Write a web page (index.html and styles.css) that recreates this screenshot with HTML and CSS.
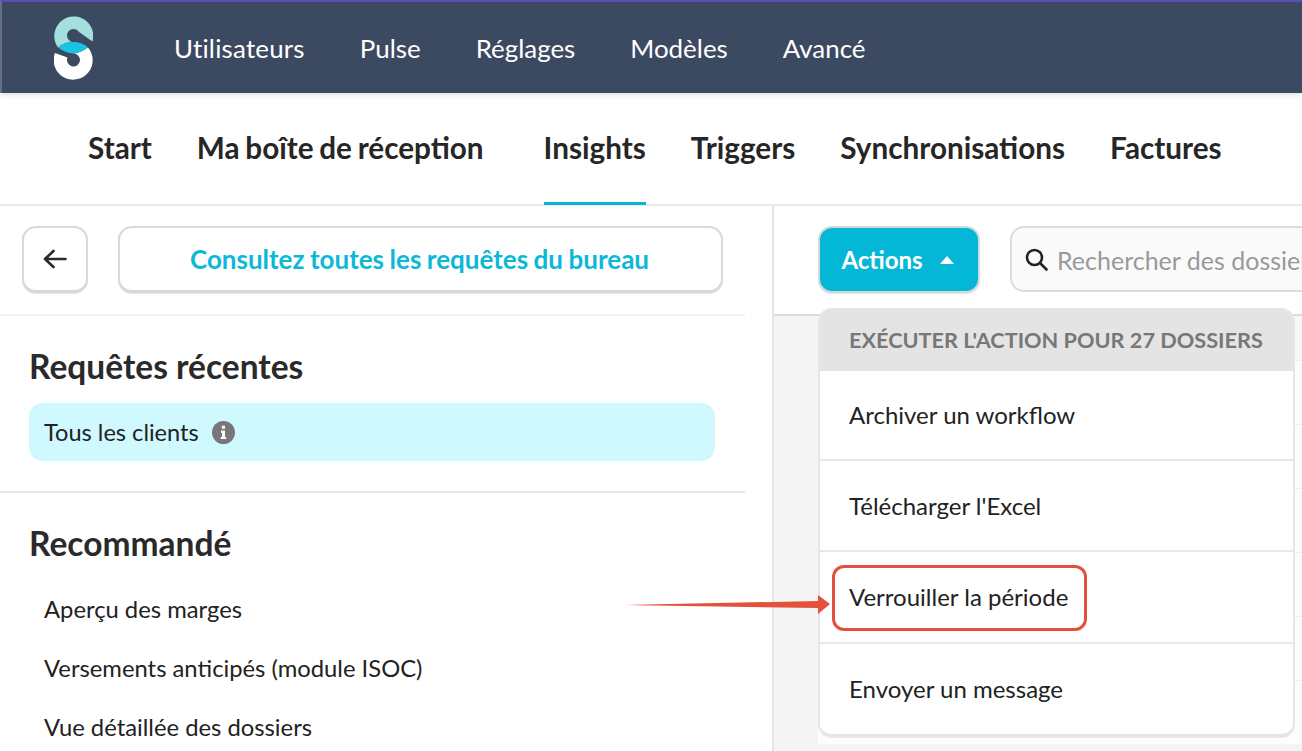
FILE: index.html
```html
<!DOCTYPE html>
<html lang="fr">
<head>
  <meta charset="UTF-8" />
  <meta name="viewport" content="width=device-width, initial-scale=1" />
  <title>Insights</title>
  <link rel="stylesheet" href="styles.css">
</head>
<body>
  <header class="topbar">
    <svg class="logo" viewBox="54 16 39 64" width="39" height="64" aria-label="Logo">
      <path fill="#a3e0dd" d="M92.5 41.5A19.5 19.5 0 1 0 58 47.5Q65 41.5 73.5 42A6.5 6.5 0 1 1 79 32Z"/>
      <path fill="#fff" d="M55 53A19.5 19.5 0 1 0 88 47.5Q80 53 73.5 53.5A6.5 6.5 0 1 1 67.5 57.5Z"/>
      <path fill="#19c3e3" d="M58 47.5Q65 41.5 73.5 42Q82 42 88 47.5Q80 53 73.5 53.5Q65 53 58 47.5Z"/>
    </svg>
    <nav class="topnav">
      <a>Utilisateurs</a>
      <a>Pulse</a>
      <a>Réglages</a>
      <a>Modèles</a>
      <a>Avancé</a>
    </nav>
  </header>

  <nav class="tabs">
    <a>Start</a>
    <a class="tab-wide">Ma boîte de réception</a>
    <a class="active">Insights</a>
    <a>Triggers</a>
    <a>Synchronisations</a>
    <a>Factures</a>
  </nav>

  <main class="content">
    <aside class="sidebar">
      <div class="side-actions">
        <button class="btn btn-back" aria-label="Retour">
          <svg width="24" height="24" viewBox="0 0 24 24" fill="none" stroke="#2b2b2b" stroke-width="2.6" stroke-linecap="round" stroke-linejoin="round"><path d="M22.5 12H2M10.5 4L2 12L10.5 20"/></svg>
        </button>
        <button class="btn btn-all">Consultez toutes les requêtes du bureau</button>
      </div>

      <section class="side-section">
        <h2>Requêtes récentes</h2>
        <div class="query-active">
          Tous les clients
          <svg class="info" width="23" height="23" viewBox="0 0 22 22"><circle cx="11" cy="11" r="11" fill="#777"/><path fill="#fff" d="M9.4 4.6h3v2.8h-3zM8.6 9.2h3.8v6h1.2v2h-5.2v-2h1.2v-4h-1z"/></svg>
        </div>
      </section>

      <section class="side-section">
        <h2>Recommandé</h2>
        <ul class="query-list">
          <li>Aperçu des marges</li>
          <li>Versements anticipés (module ISOC)</li>
          <li>Vue détaillée des dossiers</li>
        </ul>
      </section>
    </aside>

    <section class="panel">
      <div class="toolbar">
        <button class="btn-actions">Actions <span class="caret"></span></button>
        <div class="search">
          <svg width="25" height="25" viewBox="0 0 25 25" fill="none" stroke="#222" stroke-width="2.6" stroke-linecap="round"><circle cx="10.5" cy="10.5" r="7.5"/><path d="M16 16L22.5 22.5"/></svg>
          <span>Rechercher des dossiers</span>
        </div>

        <div class="menu">
          <div class="menu-head">Exécuter l'action pour 27 dossiers</div>
          <a>Archiver un workflow</a>
          <a>Télécharger l'Excel</a>
          <a>Verrouiller la période</a>
          <a>Envoyer un message</a>
        </div>
      </div>

      <div class="table">
        <div class="table-head"></div>
        <div class="row"></div>
        <div class="row"></div>
        <div class="row"></div>
        <div class="row"></div>
        <div class="row"></div>
        <div class="row"></div>
      </div>
    </section>
  </main>

  <!-- Annotation drawn over the screenshot -->
  <div class="callout"></div>
  <svg class="callout-arrow" width="210" height="24" viewBox="0 0 210 24">
    <defs>
      <linearGradient id="tail" x1="0" x2="1" y1="0" y2="0">
        <stop offset="0" stop-color="#e4503b" stop-opacity=".35"/>
        <stop offset=".08" stop-color="#e4503b"/>
      </linearGradient>
    </defs>
    <polygon fill="url(#tail)" points="0,12 196,8 196,2 208,11 196,21 196,15"/>
  </svg>
</body>
</html>
```

FILE: styles.css
```css
* {
  box-sizing: border-box;
}

html, body {
  height: 100%;
}

body {
  margin: 0;
  font-family: 'Lato', 'Liberation Sans', sans-serif;
  color: #222;
  background: #fff;
  overflow: hidden;
}

button {
  font-family: inherit;
  cursor: pointer;
}

/* Top bar */
.topbar {
  height: 93px;
  display: flex;
  align-items: center;
  padding-left: 52px;
  background: #3c4a61;
  border-top: 2px solid #5c4fb3;
  border-left: 2px solid #667186;
  box-shadow: 0 2px 6px rgba(0, 0, 0, 0.12);
  position: relative;
}

.logo {
  flex: none;
  margin-top: 1px;
}

.topnav {
  display: flex;
  gap: 55px;
  margin-left: 81px;
  padding-top: 1px;
}

.topnav a {
  color: #fff;
  font-size: 25.9px;
}

.topnav a:first-child {
  letter-spacing: 0.2px;
}

/* Main tabs */
.tabs {
  height: 113px;
  display: flex;
  gap: 45px;
  padding-left: 88px;
  border-bottom: 2px solid #e8e8e8;
}

.tabs a {
  display: flex;
  align-items: center;
  padding-bottom: 1px;
  font-size: 29.7px;
  word-spacing: -1.5px;
  font-weight: 700;
  color: #262626;
  border-bottom: 3px solid transparent;
  margin-bottom: -1px;
}

.tabs .tab-wide {
  margin-right: 15px;
}

.tabs .active {
  border-bottom-color: #05b7d6;
}

/* Layout below the tabs */
.content {
  display: flex;
  height: 545px;
}

.sidebar {
  width: 774px;
  flex: none;
  border-right: 2px solid #e6e6e6;
}

.side-actions {
  display: flex;
  gap: 30px;
  width: 745px;
  padding: 20px 22px 21px 22px;
  border-bottom: 2px solid #f1f1f1;
}

.btn {
  height: 67px;
  background: #fff;
  border: 2px solid #d9d9d9;
  border-bottom-width: 3px;
  border-radius: 14px;
  box-shadow: 0 1px 1px #e6e6e6;
}

.btn-back {
  width: 66px;
  flex: none;
  display: flex;
  align-items: center;
  justify-content: center;
  padding: 0;
}

.btn-all {
  flex: 1;
  padding: 0 8px 0 6px;
  color: #0cb8d7;
  font-size: 26px;
  word-spacing: -0.8px;
  font-weight: 700;
}

.side-section {
  width: 745px;
  padding: 0 30px;
}

.side-section + .side-section {
  border-top: 2px solid #e8e8e8;
}

.side-section h2 {
  margin: 0 0 0 -1px;
  padding-top: 30px;
  font-size: 33.5px;
  line-height: 40px;
  font-weight: 700;
  color: #2a2a2a;
}

.query-active {
  display: flex;
  align-items: center;
  gap: 13px;
  height: 58px;
  margin: 17px 0 30px -1px;
  padding-left: 15px;
  background: #cff9ff;
  border-radius: 14px;
  font-size: 23.6px;
}

.query-list {
  list-style: none;
  margin: 17px 0 0;
  padding: 0 0 0 14px;
  font-size: 23.8px;
}

.query-list li {
  height: 58.7px;
  display: flex;
  align-items: center;
}

/* Right hand panel */
.panel {
  flex: 1;
  background: #f4f4f4;
  min-width: 0;
}

.toolbar {
  position: relative;
  height: 110px;
  display: flex;
  gap: 30px;
  padding: 20px 0 0 44px;
  background: #fff;
  border-bottom: 2px solid #dcdcdc;
}

.btn-actions {
  width: 162px;
  height: 67px;
  flex: none;
  display: flex;
  align-items: center;
  justify-content: center;
  gap: 17px;
  padding: 0 3px 0 0;
  color: #fff;
  font-size: 24px;
  font-weight: 700;
  background: #05b7d6;
  border: 2px solid #d4dadb;
  border-radius: 14px;
  box-shadow: 0 1px 1px #e0e0e0;
}

.caret {
  width: 0;
  height: 0;
  border-left: 7px solid transparent;
  border-right: 7px solid transparent;
  border-bottom: 8px solid #fff;
}

.search {
  width: 400px;
  height: 66px;
  flex: none;
  display: flex;
  align-items: center;
  gap: 8px;
  padding-left: 12px;
  background: #fafafa;
  border: 2px solid #dcdcdc;
  border-radius: 14px;
  font-size: 25px;
  color: #999;
  white-space: nowrap;
}

.search span {
  padding-top: 2px;
}

/* Open dropdown */
.menu {
  position: absolute;
  left: 44px;
  top: 102px;
  width: 477px;
  background: #fff;
  border: 2px solid #e6e6e6;
  border-top: 0;
  border-bottom-width: 4px;
  border-radius: 14px;
  overflow: hidden;
  z-index: 5;
}

.menu-head {
  height: 63px;
  display: flex;
  align-items: center;
  padding-left: 29px;
  background: #e4e4e4;
  color: #777;
  font-size: 21.7px;
  font-weight: 700;
  text-transform: uppercase;
}

.menu a {
  height: 91.5px;
  display: flex;
  align-items: center;
  padding-left: 29px;
  font-size: 24px;
  color: #222;
}

.menu-head + a {
  height: 87.5px;
}

.menu a:last-child {
  height: 92px;
}

.menu a + a {
  border-top: 2px solid #e8e8e8;
}

/* Table behind the dropdown */
.table {
  margin-left: 44px;
  background: #fff;
}

.table-head {
  height: 44px;
  background: #f8f8f8;
}

.row {
  height: 64px;
  border-top: 1px solid #efefef;
  background: #fdfdfd;
}

/* Red annotation */
.callout {
  position: absolute;
  left: 832px;
  top: 565px;
  width: 255px;
  height: 66px;
  border: 3px solid #e4503b;
  border-radius: 12px;
  z-index: 10;
}

.callout-arrow {
  position: absolute;
  left: 622px;
  top: 593px;
  z-index: 10;
}
```
